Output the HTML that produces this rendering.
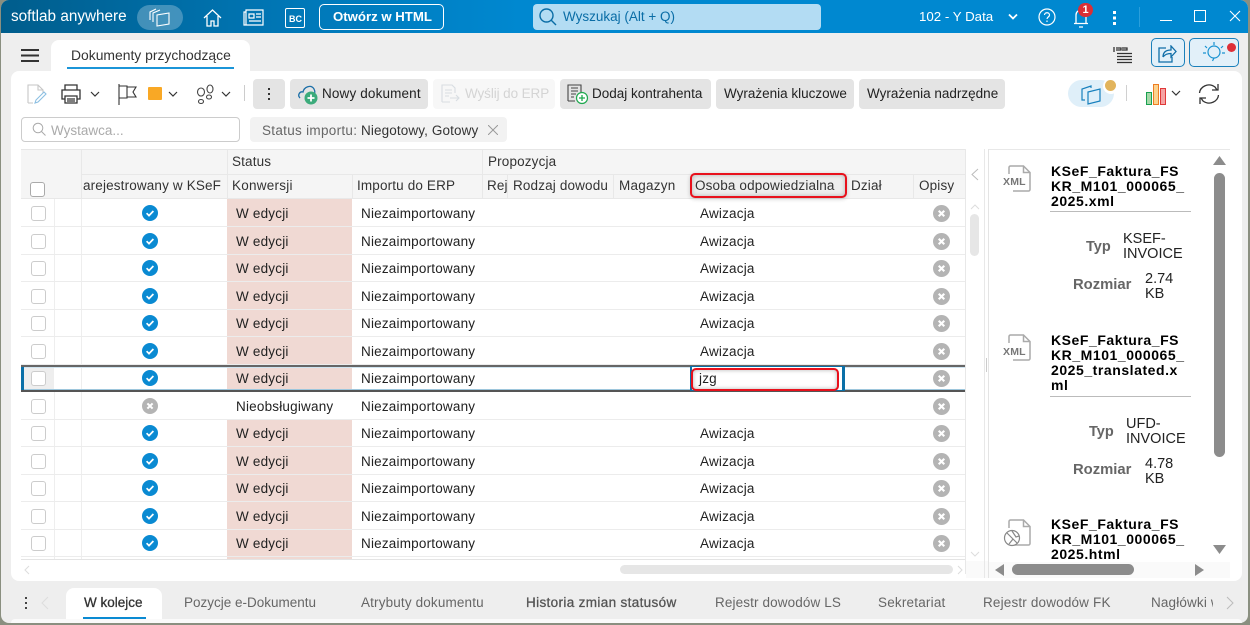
<!DOCTYPE html>
<html lang="pl"><head><meta charset="utf-8"><title>softlab anywhere</title>
<style>
html,body{margin:0;padding:0;width:1250px;height:625px;overflow:hidden;background:#8a8f80}
body{font-family:"Liberation Sans",sans-serif;font-size:13.5px;color:#222;position:relative}
#win{position:absolute;left:1px;top:0;width:1247px;height:623px;background:#eee;border-radius:8px;overflow:hidden}
#stage{position:absolute;left:-1px;top:0;width:1250px;height:625px}
.a,.t{position:absolute}
.t{white-space:nowrap;line-height:16px}
.btn{position:absolute;top:79px;height:30px;background:#e4e4e4;border-radius:4px}
.w{color:#fff}
.h{font-size:13.5px;color:#333;letter-spacing:.15px}
.g{color:#666;font-size:13.5px}
.r{position:absolute;left:21px;width:945px;border-bottom:1px solid #ececec;box-sizing:border-box;overflow:hidden}
.r .c{position:absolute;left:10px;top:6px;width:15px;height:15px;border:1px solid #ccc;border-radius:3px;background:#fff;box-sizing:border-box}
.r .v1,.r .v2{position:absolute;top:0;bottom:0;width:1px;background:#eee}
.r .v1{left:33px}.r .v2{left:60px}
.r .p{position:absolute;left:206px;width:125px;top:0;bottom:0;background:#f0d9d3}
.r .t{top:6px;letter-spacing:.2px}
.r svg{position:absolute;top:5px;width:16px;height:16px}
.r svg.n{width:17px;height:17px;top:4.5px}
.b .t,.b .c{top:7px!important}
.r.b svg{top:6px}
.r.b svg.n{top:5.5px}
.k{font-weight:bold;font-size:14px;line-height:15px;color:#000;position:absolute;left:1051px;white-space:nowrap;letter-spacing:.55px}
.lb{position:absolute;font-weight:bold;font-size:14.5px;color:#666;line-height:16px}
.vl{position:absolute;font-size:14.5px;line-height:15px;color:#222;white-space:nowrap}
.hl{position:absolute;background:#e8e8e8}
</style></head><body>
<svg width="0" height="0" style="position:absolute"><defs>
<symbol id="ok" viewBox="0 0 16 16"><circle cx="8" cy="8" r="8" fill="#0a8ad2"/><path d="M4.6 8.2l2.4 2.4 4.4-4.6" fill="none" stroke="#fff" stroke-width="1.7"/></symbol>
<symbol id="no" viewBox="0 0 16 16"><circle cx="8" cy="8" r="8" fill="#b4b4b4"/><path d="M5.4 5.4l5.2 5.2M10.6 5.4l-5.2 5.2" fill="none" stroke="#fff" stroke-width="2"/></symbol>
<symbol id="xml" viewBox="0 0 23 27"><path d="M1 9V2.500A1.500 1.500 0 0 1 2.500 1H15.500L22 7.500V24.500A1.500 1.500 0 0 1 20.500 26H5" fill="none" stroke="#aaa" stroke-width="1.500"/><path d="M15.500 1V7.500H22" fill="none" stroke="#aaa" stroke-width="1.500"/></symbol>
</defs></svg>
<div id="win"><div id="stage">

<!-- title bar -->
<div class="a" style="left:0;top:0;width:1250px;height:33px;background:linear-gradient(90deg,#005d8c 0,#0078b8 300px,#0088d0 520px,#0088d0 100%)"></div>
<div class="t w" style="left:11px;top:9px;font-size:15.3px">softlab anywhere</div>
<div class="a" style="left:137px;top:5px;width:46px;height:25px;border-radius:13px;background:rgba(255,255,255,.26)"></div>
<svg class="a" style="left:149px;top:8px" width="22" height="20" fill="none" stroke="#fff" stroke-width="1.100"><path d="M4 14V5l7-3M1 12V4l6-3M8 18V7l12-2v11z"/></svg>
<svg class="a" style="left:203px;top:9px" width="19" height="18" fill="none" stroke="#fff" stroke-width="1.300"><path d="M1 9l8.500-8L18 9M4 7v10h4v-5h3v5h4V7"/></svg>
<svg class="a" style="left:243px;top:9px" width="21" height="17" fill="none" stroke="#fff" stroke-width="1.200"><path d="M3 1h17v15H3zM3 3H1v13h2M6 5h5v4H6zM13 5h5M13 8h5M6 12h12"/></svg>
<div class="a" style="left:285px;top:8px;width:18px;height:18px;border:1px solid #fff;border-radius:2px"></div>
<div class="t w" style="left:289px;top:11px;font-size:9px;font-weight:bold;line-height:16px">BC</div>
<div class="a" style="left:319px;top:4px;width:123px;height:24px;border:1px solid #fff;border-radius:5px"></div>
<div class="t w" style="left:333px;top:9px;font-size:13.2px;font-weight:bold">Otwórz w HTML</div>
<div class="a" style="left:533px;top:4px;width:288px;height:26px;background:#b3dcf3;border-radius:4px"></div>
<svg class="a" style="left:538px;top:7px" width="20" height="20" fill="none" stroke="#0a6da6" stroke-width="1.400"><circle cx="8.500" cy="8.500" r="6.500"/><path d="M13 13l5 5"/></svg>
<div class="t" style="left:563px;top:9px;color:#0a6da6;font-size:13.500px">Wyszukaj (Alt + Q)</div>
<div class="t w" style="left:919px;top:9px;font-size:13.3px">102 - Y Data</div>
<svg class="a" style="left:1008px;top:13px" width="10" height="8" fill="none" stroke="#fff" stroke-width="1.800"><path d="M1 1.500l4 4 4-4"/></svg>
<svg class="a" style="left:1038px;top:8px" width="18" height="18" fill="none" stroke="#fff" stroke-width="1.200"><circle cx="9" cy="9" r="8"/><path d="M6.500 7c0-3 5-3 5 0 0 2-2.500 2-2.500 4M9 12.500v1.500"/></svg>
<svg class="a" style="left:1073px;top:7px" width="16" height="21" fill="none" stroke="#fff" stroke-width="1.300"><path d="M3 16V8c0-6.500 10-6.500 10 0v8M1 16.500h14M6 20h4"/></svg>
<div class="a" style="left:1078px;top:3px;width:15px;height:14px;border-radius:8px;background:#d92f36;color:#fff;font-size:11px;font-weight:bold;text-align:center;line-height:14px">1</div>
<div class="a" style="left:1113px;top:11px;width:3px;height:3px;background:#fff;box-shadow:0 5.500px 0 #fff,0 11px 0 #fff"></div>
<div class="a" style="left:1139px;top:7px;width:1px;height:20px;background:#2a9fdc"></div>
<div class="a" style="left:1160px;top:20px;width:12px;height:1px;background:#fff"></div>
<div class="a" style="left:1194px;top:10px;width:10px;height:10px;border:1px solid #fff"></div>
<svg class="a" style="left:1229px;top:10px" width="12" height="12" stroke="#fff" stroke-width="1.100"><path d="M1 1l10 10M11 1L1 11"/></svg>

<!-- top strip -->
<div class="a" style="left:21px;top:48.500px;width:18px;height:2px;background:#333;box-shadow:0 5.500px 0 #333,0 11px 0 #333"></div>
<div class="a" style="left:51px;top:40px;width:199px;height:32px;background:#fff;border-radius:8px 8px 0 0"></div>
<div class="t" style="left:71px;top:47px;font-size:13.9px;color:#333">Dokumenty przychodzące</div>
<div class="a" style="left:67px;top:67px;width:167px;height:2px;background:#1b95d8"></div>
<svg class="a" style="left:1113px;top:47px" width="20" height="17" fill="none" stroke="#333" stroke-width="1.300"><path d="M1 0v5M3 1h5v2H3M9 1h5v2H9M4 6.500h15M4 9.500h15M4 12.500h15M4 15.500h15"/></svg>
<div class="a" style="left:1151px;top:38px;width:32px;height:27px;border:1px solid #1a80bb;border-radius:5px;background:#e2f0f9"></div>
<svg class="a" style="left:1158px;top:45px" width="19" height="18" fill="none" stroke="#0f6ea8" stroke-width="1.300"><path d="M8 3H1v14h13v-5M5 12c0-5 3-7 8-7V1l5 5.500L13 12V8.500c-4 0-6 1-8 3.500"/></svg>
<div class="a" style="left:1189px;top:38px;width:48px;height:27px;border:1px solid #1a80bb;border-radius:5px;background:#e2f0f9"></div>
<svg class="a" style="left:1202px;top:41px" width="24" height="22" fill="none" stroke="#1a93d1" stroke-width="1.200"><circle cx="12" cy="11" r="6"/><path d="M12 1v3M3 5l2 2M21 5l-2 2M1 12h3M20 12h3M12 17l-1.500 3"/></svg>
<div class="a" style="left:1227px;top:43px;width:9px;height:9px;border-radius:5px;background:#de3038"></div>

<!-- main panel -->
<div class="a" style="left:11px;top:71px;width:1231px;height:510px;background:#fff;border-radius:8px"></div>

<!-- toolbar left -->
<svg class="a" style="left:27px;top:84px" width="20" height="21" fill="none" stroke="#c6c6c6" stroke-width="1.100"><path d="M1 19V1h10l5 5v3M11 1v5h5M1 19h5"/><path d="M8 19l1-3 8-8 2 2-8 8z" stroke="#8cbfe2"/></svg>
<svg class="a" style="left:61px;top:84px" width="20" height="20" fill="none" stroke="#333" stroke-width="1.300"><path d="M4 6V1h12v5M4 15H1V6h18v9h-3M4 12h12v7H4zM6 15h8M6 17h8"/></svg>
<svg class="a" style="left:90px;top:91px" width="10" height="7" fill="none" stroke="#333" stroke-width="1.200"><path d="M1 1l4 4 4-4"/></svg>
<svg class="a" style="left:118px;top:84px" width="20" height="21" fill="none" stroke="#333" stroke-width="1.100"><path d="M1 0v21M1 2h8v12H1M9 3h9l-3 5 3 5H9"/></svg>
<div class="a" style="left:148px;top:87px;width:14px;height:13px;background:#f9a825;border-radius:1px"></div>
<svg class="a" style="left:168px;top:91px" width="10" height="7" fill="none" stroke="#333" stroke-width="1.200"><path d="M1 1l4 4 4-4"/></svg>
<svg class="a" style="left:196px;top:84px" width="20" height="21" fill="none" stroke="#444" stroke-width="1.100"><ellipse cx="5" cy="8" rx="3.500" ry="4"/><ellipse cx="5" cy="17.500" rx="2.500" ry="2"/><ellipse cx="14" cy="5" rx="3" ry="4"/><ellipse cx="13" cy="13" rx="2.500" ry="2"/></svg>
<svg class="a" style="left:221px;top:91px" width="10" height="7" fill="none" stroke="#333" stroke-width="1.200"><path d="M1 1l4 4 4-4"/></svg>
<div class="a" style="left:244px;top:85px;width:1px;height:16px;background:#ccc"></div>
<div class="btn" style="left:253px;width:32px"></div>
<div class="a" style="left:268px;top:88px;width:2px;height:2px;background:#333;box-shadow:0 5px 0 #333,0 10px 0 #333"></div>
<div class="btn" style="left:290px;width:138px"></div>
<svg class="a" style="left:297px;top:83px" width="22" height="22" fill="none"><path d="M3 15c-3-3 0-7 3-6 1-5 8-8 11-3 1 2 1 4 0 5" stroke="#1c6fa8" stroke-width="1.300"/><circle cx="14" cy="15" r="6.500" fill="#3cab7b"/><path d="M14 11.500v7M10.500 15h7" stroke="#fff" stroke-width="1.800"/></svg>
<div class="t" style="left:322px;top:86px;letter-spacing:.15px">Nowy dokument</div>
<div class="btn" style="left:433px;width:122px;background:#f7f7f7"></div>
<svg class="a" style="left:441px;top:84px" width="20" height="20" fill="none" stroke="#d8dde2" stroke-width="1.100"><path d="M1 18V1h10l3 3v5M1 18h8M4 6h7M4 9h7M4 12h4M9 14h9M15 11l3 3-3 3"/></svg>
<div class="t" style="left:465px;top:86px;color:#d4d4d4;letter-spacing:-.1px">Wyślij do ERP</div>
<div class="btn" style="left:560px;width:151px"></div>
<svg class="a" style="left:567px;top:83px" width="22" height="22" fill="none"><path d="M1 18V2h13v8M4 5h7M4 8h7M4 11h5M4 14h3M1 18h7" stroke="#444" stroke-width="1.100"/><circle cx="15" cy="15" r="5.500" fill="#fff" stroke="#1fa84f" stroke-width="1.200"/><path d="M15 12v6M12 15h6" stroke="#1fa84f" stroke-width="1.300"/></svg>
<div class="t" style="left:592px;top:86px">Dodaj kontrahenta</div>
<div class="btn" style="left:716px;width:138px"></div>
<div class="t" style="left:724px;top:86px">Wyrażenia kluczowe</div>
<div class="btn" style="left:859px;width:146px"></div>
<div class="t" style="left:867px;top:86px">Wyrażenia nadrzędne</div>
<!-- toolbar right -->
<div class="a" style="left:1068px;top:80px;width:46px;height:27px;border-radius:14px;background:#dfeff9"></div>
<svg class="a" style="left:1081px;top:83px" width="20" height="22" fill="none" stroke="#1780bd" stroke-width="1.200"><path d="M4 17H1V6l9-3v2M7 21V9l12-3v12z"/></svg>
<div class="a" style="left:1103px;top:78px;width:16px;height:16px;border-radius:8px;background:#fff"></div>
<div class="a" style="left:1105px;top:80px;width:11px;height:11px;border-radius:6px;background:#e2b45c"></div>
<div class="a" style="left:1126px;top:85px;width:1px;height:16px;background:#d0d0d0"></div>
<div class="a" style="left:1146px;top:92px;width:4px;height:11px;background:#a5d8a8;border:1px solid #18a050"></div>
<div class="a" style="left:1153px;top:84px;width:4px;height:19px;background:#fbd38f;border:1px solid #ee7d22"></div>
<div class="a" style="left:1160px;top:88px;width:4px;height:15px;background:#f5a3a3;border:1px solid #e03838"></div>
<svg class="a" style="left:1171px;top:90px" width="10" height="7" fill="none" stroke="#333" stroke-width="1.200"><path d="M1 1l4 4 4-4"/></svg>
<svg class="a" style="left:1198px;top:83px" width="22" height="22" fill="none" stroke="#333" stroke-width="1.300"><path d="M1.500 10C2 4 10-1 17 4l2 3M20 1v6h-6M20.500 12C20 18 12 23 5 18l-2-3M2 21v-6h6"/></svg>

<!-- filters -->
<div class="a" style="left:21px;top:117px;width:217px;height:23px;border:1px solid #ccc;border-radius:4px"></div>
<svg class="a" style="left:32px;top:122px" width="14" height="14" fill="none" stroke="#aaa" stroke-width="1"><circle cx="6" cy="6" r="4.800"/><path d="M9.500 9.500l4 4"/></svg>
<div class="t" style="left:51px;top:123px;color:#aaa">Wystawca...</div>
<div class="a" style="left:250px;top:117px;width:257px;height:25px;background:#f2f2f2;border-radius:4px"></div>
<div class="t" style="left:262px;top:123px;color:#666;letter-spacing:.3px">Status importu:</div>
<div class="t" style="left:361px;top:123px;color:#333;letter-spacing:.12px">Niegotowy, Gotowy</div>
<svg class="a" style="left:488px;top:125px" width="10" height="10" stroke="#999" stroke-width="1"><path d="M0 0l10 10M10 0L0 10"/></svg>

<!-- grid header -->
<div class="a" style="left:21px;top:149px;width:945px;height:50px;background:#f5f5f5;border-top:1px solid #e6e6e6;box-sizing:border-box"></div>
<div class="hl" style="left:81px;top:174px;width:885px;height:1px"></div>
<div class="hl" style="left:81px;top:150px;width:1px;height:49px"></div>
<div class="hl" style="left:227px;top:150px;width:1px;height:49px"></div>
<div class="hl" style="left:352px;top:174px;width:1px;height:25px"></div>
<div class="hl" style="left:482px;top:150px;width:1px;height:49px"></div>
<div class="hl" style="left:507px;top:174px;width:1px;height:25px"></div>
<div class="hl" style="left:613px;top:174px;width:1px;height:25px"></div>
<div class="hl" style="left:913px;top:174px;width:1px;height:25px"></div>
<div class="hl" style="left:21px;top:198px;width:945px;height:1px"></div>
<div class="a" style="left:30px;top:182px;width:13px;height:13px;border:1px solid #aaa;border-radius:3px;background:#fff"></div>
<div class="t h" style="left:232px;top:154px">Status</div>
<div class="t h" style="left:488px;top:154px">Propozycja</div>
<div class="a" style="left:82px;top:177px;width:144px;height:18px;overflow:hidden"><div class="t h" style="left:1px;top:1px">arejestrowany w KSeF</div></div>
<div class="t h" style="left:232px;top:178px;letter-spacing:.25px">Konwersji</div>
<div class="t h" style="left:357px;top:178px">Importu do ERP</div>
<div class="a" style="left:487px;top:177px;width:20px;height:18px;overflow:hidden"><div class="t h" style="left:0;top:1px">Rejestr</div></div>
<div class="t h" style="left:513px;top:178px">Rodzaj dowodu</div>
<div class="t h" style="left:619px;top:178px;letter-spacing:.25px">Magazyn</div>
<div class="t h" style="left:851px;top:178px">Dział</div>
<div class="t h" style="left:919px;top:178px">Opisy</div>
<div class="a" style="left:690px;top:173px;width:157px;height:25px;border:2px solid #e8111c;border-radius:5px;box-sizing:border-box;box-shadow:inset 0 0 5px rgba(0,0,0,.25),0 1px 4px rgba(0,0,0,.2);background:#eee"></div>
<div class="t h" style="left:695px;top:178px">Osoba odpowiedzialna</div>
<svg class="a" style="left:970px;top:168px" width="9" height="13" fill="none" stroke="#bbb" stroke-width="1"><path d="M8 1L2 6.500 8 12"/></svg>

<!-- rows -->
<div class="r b" style="top:199px;height:28px"><i class="c"></i><i class="v1"></i><i class="v2"></i><i class="p"></i><svg style="left:121px"><use href="#ok"/></svg><span class="t" style="left:215px">W edycji</span><span class="t" style="left:340px">Niezaimportowany</span><span class="t" style="left:679px">Awizacja</span><svg class="n" style="left:912px"><use href="#no"/></svg></div>
<div class="r b" style="top:227px;height:28px"><i class="c"></i><i class="v1"></i><i class="v2"></i><i class="p"></i><svg style="left:121px"><use href="#ok"/></svg><span class="t" style="left:215px">W edycji</span><span class="t" style="left:340px">Niezaimportowany</span><span class="t" style="left:679px">Awizacja</span><svg class="n" style="left:912px"><use href="#no"/></svg></div>
<div class="r" style="top:255px;height:27px"><i class="c"></i><i class="v1"></i><i class="v2"></i><i class="p"></i><svg style="left:121px"><use href="#ok"/></svg><span class="t" style="left:215px">W edycji</span><span class="t" style="left:340px">Niezaimportowany</span><span class="t" style="left:679px">Awizacja</span><svg class="n" style="left:912px"><use href="#no"/></svg></div>
<div class="r b" style="top:282px;height:28px"><i class="c"></i><i class="v1"></i><i class="v2"></i><i class="p"></i><svg style="left:121px"><use href="#ok"/></svg><span class="t" style="left:215px">W edycji</span><span class="t" style="left:340px">Niezaimportowany</span><span class="t" style="left:679px">Awizacja</span><svg class="n" style="left:912px"><use href="#no"/></svg></div>
<div class="r" style="top:310px;height:27px"><i class="c"></i><i class="v1"></i><i class="v2"></i><i class="p"></i><svg style="left:121px"><use href="#ok"/></svg><span class="t" style="left:215px">W edycji</span><span class="t" style="left:340px">Niezaimportowany</span><span class="t" style="left:679px">Awizacja</span><svg class="n" style="left:912px"><use href="#no"/></svg></div>
<div class="r b" style="top:337px;height:28px"><i class="c"></i><i class="v1"></i><i class="v2"></i><i class="p"></i><svg style="left:121px"><use href="#ok"/></svg><span class="t" style="left:215px">W edycji</span><span class="t" style="left:340px">Niezaimportowany</span><span class="t" style="left:679px">Awizacja</span><svg class="n" style="left:912px"><use href="#no"/></svg></div>
<div class="r" style="top:365px;height:27px;border:0"><i class="a" style="left:3px;top:0;width:30px;height:27px;background:#eee"></i><i class="c"></i><i class="v2"></i><i class="p"></i><svg style="left:121px"><use href="#ok"/></svg><span class="t" style="left:215px">W edycji</span><span class="t" style="left:340px">Niezaimportowany</span><svg class="n" style="left:912px"><use href="#no"/></svg>
<i class="a" style="left:0;top:0;width:945px;height:2px;background:#666"></i><i class="a" style="left:0;top:25px;width:945px;height:2px;background:#555"></i><i class="a" style="left:0;top:2px;width:945px;height:1px;background:#cfe4f0"></i><i class="a" style="left:0;top:24px;width:945px;height:1px;background:#9dc6dc"></i><i class="a" style="left:0;top:2px;width:3px;height:23px;background:#0a70a8"></i>
<i class="a" style="left:669px;top:1px;width:155px;height:25px;background:#0a70a8"></i><i class="a" style="left:671px;top:2px;width:150px;height:23px;background:#fff"></i>
<i class="a" style="left:670px;top:3px;width:148px;height:23px;border:2px solid #e8111c;border-radius:5px;box-sizing:border-box;background:#fff;box-shadow:inset 0 0 4px rgba(0,0,0,.3)"></i><span class="t" style="left:678px;top:6px">jzg</span></div>
<div class="r b" style="top:392px;height:28px"><i class="c"></i><i class="v1"></i><i class="v2"></i><svg style="left:121px"><use href="#no"/></svg><span class="t" style="left:215px">Nieobsługiwany</span><span class="t" style="left:340px">Niezaimportowany</span><svg class="n" style="left:912px"><use href="#no"/></svg></div>
<div class="r" style="top:420px;height:27px"><i class="c"></i><i class="v1"></i><i class="v2"></i><i class="p"></i><svg style="left:121px"><use href="#ok"/></svg><span class="t" style="left:215px">W edycji</span><span class="t" style="left:340px">Niezaimportowany</span><span class="t" style="left:679px">Awizacja</span><svg class="n" style="left:912px"><use href="#no"/></svg></div>
<div class="r b" style="top:447px;height:28px"><i class="c"></i><i class="v1"></i><i class="v2"></i><i class="p"></i><svg style="left:121px"><use href="#ok"/></svg><span class="t" style="left:215px">W edycji</span><span class="t" style="left:340px">Niezaimportowany</span><span class="t" style="left:679px">Awizacja</span><svg class="n" style="left:912px"><use href="#no"/></svg></div>
<div class="r" style="top:475px;height:27px"><i class="c"></i><i class="v1"></i><i class="v2"></i><i class="p"></i><svg style="left:121px"><use href="#ok"/></svg><span class="t" style="left:215px">W edycji</span><span class="t" style="left:340px">Niezaimportowany</span><span class="t" style="left:679px">Awizacja</span><svg class="n" style="left:912px"><use href="#no"/></svg></div>
<div class="r b" style="top:502px;height:28px"><i class="c"></i><i class="v1"></i><i class="v2"></i><i class="p"></i><svg style="left:121px"><use href="#ok"/></svg><span class="t" style="left:215px">W edycji</span><span class="t" style="left:340px">Niezaimportowany</span><span class="t" style="left:679px">Awizacja</span><svg class="n" style="left:912px"><use href="#no"/></svg></div>
<div class="r" style="top:530px;height:27px"><i class="c"></i><i class="v1"></i><i class="v2"></i><i class="p"></i><svg style="left:121px"><use href="#ok"/></svg><span class="t" style="left:215px">W edycji</span><span class="t" style="left:340px">Niezaimportowany</span><span class="t" style="left:679px">Awizacja</span><svg class="n" style="left:912px"><use href="#no"/></svg></div>
<div class="r" style="top:557px;height:3px;border-bottom:1px solid #e4e4e4"><i class="v1"></i><i class="v2"></i><i class="p"></i></div>

<!-- grid scrollbars -->
<div class="a" style="left:965px;top:149px;width:1px;height:425px;background:#e8e8e8"></div>
<div class="a" style="left:970px;top:214px;width:9px;height:42px;background:#e6e6e6;border-radius:5px"></div>
<svg class="a" style="left:970px;top:204px" width="10" height="6" fill="none" stroke="#ddd"><path d="M1 5l4-4 4 4"/></svg>
<svg class="a" style="left:970px;top:551px" width="10" height="6" fill="none" stroke="#ddd"><path d="M1 1l4 4 4-4"/></svg>
<svg class="a" style="left:24px;top:565px" width="6" height="10" fill="none" stroke="#ddd"><path d="M5 1L1 5l4 4"/></svg>
<div class="a" style="left:620px;top:565px;width:333px;height:9px;background:#e6e6e6;border-radius:5px"></div>
<svg class="a" style="left:957px;top:565px" width="6" height="10" fill="none" stroke="#ddd"><path d="M1 1l4 4-4 4"/></svg>
<div class="a" style="left:966px;top:561px;width:22px;height:17px;background:#fafafa"></div>
<div class="a" style="left:984px;top:149px;width:1px;height:429px;background:#e8e8e8"></div>
<div class="a" style="left:988px;top:149px;width:1px;height:429px;background:#e4e4e4"></div>
<div class="a" style="left:986px;top:358px;width:1px;height:14px;background:#ccc"></div>

<!-- right panel -->
<div class="a" style="left:989px;top:149px;width:241px;height:1px;background:#e8e8e8"></div>
<div class="a" style="left:989px;top:150px;width:241px;height:412px;overflow:hidden">
<svg class="a" style="left:19px;top:15px" width="23" height="27"><use href="#xml"/></svg>
<div class="t" style="left:14px;top:24px;font-size:10.500px;color:#777;font-weight:bold;letter-spacing:.2px">XML</div>
<div class="k" style="left:62px;top:14px">KSeF_Faktura_FS<br>KR_M101_000065_<br>2025.xml</div>
<div class="a" style="left:61px;top:61px;width:141px;height:1px;background:#bbb"></div>
<div class="lb" style="left:97px;top:89px">Typ</div>
<div class="vl" style="left:134px;top:82px">KSEF-<br>INVOICE</div>
<div class="lb" style="left:84px;top:127px;font-size:14.8px">Rozmiar</div>
<div class="vl" style="left:156px;top:122px">2.74<br>KB</div>
<svg class="a" style="left:19px;top:184px" width="23" height="27"><use href="#xml"/></svg>
<div class="t" style="left:14px;top:194px;font-size:10.500px;color:#777;font-weight:bold;letter-spacing:.2px">XML</div>
<div class="k" style="left:62px;top:183px">KSeF_Faktura_FS<br>KR_M101_000065_<br>2025_translated.x<br>ml</div>
<div class="a" style="left:61px;top:246px;width:141px;height:1px;background:#bbb"></div>
<div class="lb" style="left:100px;top:274px">Typ</div>
<div class="vl" style="left:137px;top:267px">UFD-<br>INVOICE</div>
<div class="lb" style="left:84px;top:312px;font-size:14.8px">Rozmiar</div>
<div class="vl" style="left:156px;top:307px">4.78<br>KB</div>
<svg class="a" style="left:19px;top:369px" width="23" height="27"><use href="#xml"/></svg>
<svg class="a" style="left:14px;top:379px" width="18" height="18" fill="#fff" stroke="#888" stroke-width="1.200"><circle cx="9" cy="9" r="7.500"/><path d="M4 4l6 6-4 5M9 2l4 6 3-1M10 10l4 4" fill="none"/></svg>
<div class="k" style="left:62px;top:367px">KSeF_Faktura_FS<br>KR_M101_000065_<br>2025.html</div>
</div>
<div class="a" style="left:989px;top:562px;width:241px;height:16px;background:#fafafa"></div>
<svg class="a" style="left:1213px;top:156px" width="13" height="9" fill="#8c8c8c"><path d="M6.500 0L13 9H0z"/></svg>
<div class="a" style="left:1214px;top:173px;width:11px;height:284px;background:#8c8c8c;border-radius:6px"></div>
<svg class="a" style="left:1213px;top:545px" width="13" height="9" fill="#8c8c8c"><path d="M0 0h13L6.500 9z"/></svg>
<svg class="a" style="left:995px;top:564px" width="9" height="12" fill="#8c8c8c"><path d="M9 0v12L0 6z"/></svg>
<div class="a" style="left:1012px;top:564px;width:122px;height:11px;background:#8c8c8c;border-radius:6px"></div>
<svg class="a" style="left:1195px;top:564px" width="9" height="12" fill="#8c8c8c"><path d="M0 0l9 6-9 6z"/></svg>

<!-- bottom tabs -->
<div class="a" style="left:25px;top:597px;width:2px;height:2px;background:#444;box-shadow:0 5px 0 #444,0 10px 0 #444"></div>
<svg class="a" style="left:41px;top:596px" width="8" height="14" fill="none" stroke="#ddd"><path d="M7 1L1 7l6 6"/></svg>
<div class="a" style="left:66px;top:588px;width:96px;height:32px;background:#fff;border-radius:8px 8px 0 0"></div>
<div class="t" style="left:84px;top:595px;color:#333;font-size:13.500px;-webkit-text-stroke:.3px #333">W kolejce</div>
<div class="a" style="left:83px;top:617px;width:63px;height:2px;background:#0a8ad2"></div>
<div class="t g" style="left:184px;top:595px">Pozycje e-Dokumentu</div>
<div class="t g" style="left:361px;top:595px;letter-spacing:.15px">Atrybuty dokumentu</div>
<div class="t g" style="left:526px;top:595px;color:#555;letter-spacing:.35px;-webkit-text-stroke:.3px #555">Historia zmian statusów</div>
<div class="t g" style="left:715px;top:595px;letter-spacing:.12px">Rejestr dowodów LS</div>
<div class="t g" style="left:878px;top:595px;letter-spacing:.2px">Sekretariat</div>
<div class="t g" style="left:983px;top:595px;letter-spacing:.17px">Rejestr dowodów FK</div>
<div class="a" style="left:1151px;top:594px;width:62px;height:18px;overflow:hidden"><div class="t g" style="left:0;top:1px;letter-spacing:.15px">Nagłówki wiersza</div></div>
<svg class="a" style="left:1226px;top:596px" width="8" height="14" fill="none" stroke="#bbb"><path d="M1 1l6 6-6 6"/></svg>
<div class="a" style="left:11px;top:619px;width:1231px;height:4px;background:#fafafa;border-radius:6px 6px 0 0"></div>
</div></div>
</body></html>
